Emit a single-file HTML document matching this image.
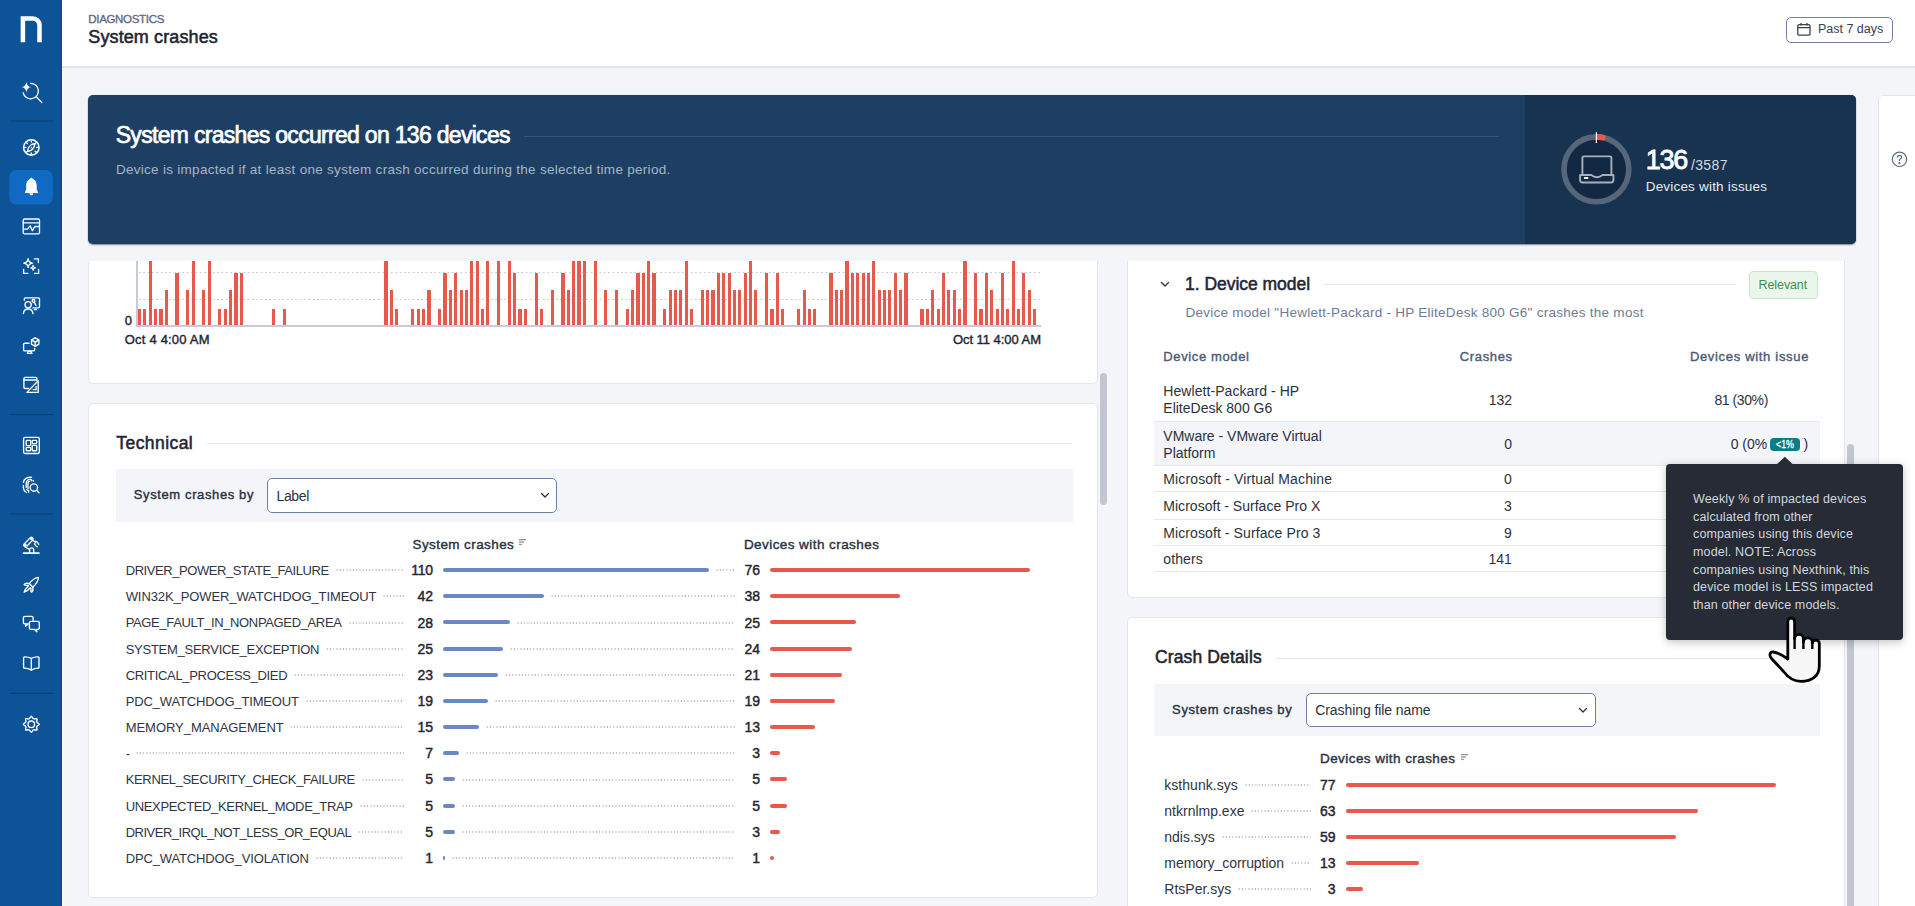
<!DOCTYPE html>
<html><head><meta charset="utf-8">
<style>
* { box-sizing:border-box; margin:0; padding:0; }
html,body { width:1915px; height:906px; overflow:hidden; background:#f4f5f9; font-family:"Liberation Sans", sans-serif; color:#1f2532; }
.abs { position:absolute; }
.t { position:absolute; white-space:nowrap; line-height:normal; }
.cb { position:absolute; width:3.2px; background:#e8584c; }
.bar { position:absolute; height:4px; border-radius:2px; }
.blue { background:#6a89c4; }
.red { background:#e8584c; }
.dots { position:absolute; height:2px; background-image:radial-gradient(circle at 1px 1px, #a9afbc 0.5px, transparent 0.85px); background-size:3.25px 2px; background-repeat:repeat-x; }
.panel { position:absolute; background:#fff; border:1px solid #e3e5f0; border-radius:5px; }
.hline { position:absolute; height:1px; background:#e3e6ee; }
.fbar { position:absolute; background:#f4f5f9; }
.sel { position:absolute; background:#fff; border:1.5px solid #6f80a0; border-radius:5px; }
.rb { position:absolute; left:1154px; width:666px; height:1px; background:#e6e8ef; }
</style></head><body>
<!-- sidebar -->
<div class="abs" style="left:0;top:0;width:62px;height:906px;background:#0c5397"></div>
<div class="abs" style="left:60px;top:0;width:1.5px;height:906px;background:#0a4b8e"></div>
<svg style="position:absolute;left:0;top:0" width="62" height="906" viewBox="0 0 62 906"><path d="M22.9 42.3 V18.4 H32.8 A6.7 6.7 0 0 1 39.5 25.1 V42.3" stroke="#fff" stroke-width="4.5" fill="none" stroke-linejoin="miter"/><g transform="translate(14,74)"><g stroke="#fff" fill="none" stroke-width="1.35" stroke-linecap="round" stroke-linejoin="round"><path d="M16.5 9.4 A7.7 7.7 0 1 1 9.2 18.8"/><path d="M22.9 23.6 L27.8 28.5"/></g><path d="M12.4 7.9 Q13 12.5 17.3 13.1 Q13 13.7 12.4 18.4 Q11.8 13.7 7.5 13.1 Q11.8 12.5 12.4 7.9Z" fill="#fff"/></g><g transform="translate(14,130)"><g stroke="#fff" fill="none" stroke-width="1.35" stroke-linecap="round" stroke-linejoin="round"><circle cx="17.3" cy="17.4" r="7.7" stroke-width="1.6"/><path d="M17.30 10.80 L17.30 12.00"/><path d="M21.97 12.73 L21.12 13.58"/><path d="M23.90 17.40 L22.70 17.40"/><path d="M21.97 22.07 L21.12 21.22"/><path d="M17.30 24.00 L17.30 22.80"/><path d="M12.63 22.07 L13.48 21.22"/><path d="M10.70 17.40 L11.90 17.40"/><path d="M12.63 12.73 L13.48 13.58"/><path d="M21 13.8 Q20 18.5 17.3 20.1 Q14.6 21.5 13.6 21.2 Q14.3 16.4 17.3 14.7 Q19.6 13.5 21 13.8Z" stroke-width="1.3"/><circle cx="17.3" cy="17.4" r="0.6" fill="#fff" stroke="none"/></g></g><rect x="9.3" y="169.9" width="43.6" height="34.7" rx="7.5" fill="#1069c3"/><path d="M31.4 178.6 C27.6 179.2 26.2 182.5 26.2 186 V189.3 L24.7 192.9 H38.2 L36.7 189.3 V186 C36.7 182.5 35.3 179.2 31.4 178.6Z" fill="#fff"/><circle cx="31.4" cy="178.8" r="1.1" fill="#fff"/><path d="M29.6 193.2 H33.2 V194 Q33.2 195.3 31.4 195.3 Q29.6 195.3 29.6 194Z" fill="#fff"/><g transform="translate(14,210)"><g stroke="#fff" fill="none" stroke-width="1.35" stroke-linecap="round" stroke-linejoin="round"><rect x="9.2" y="9" width="16.3" height="14.8" rx="1.4"/><path d="M9.2 12.8 H25.5"/><path d="M10.1 19.1 H13.5 L16.1 15.8 L18.4 20.6 L20.6 16.8 Q21.3 16.5 22 16.5 H25.3"/></g></g><g transform="translate(14,249)"><g stroke="#fff" fill="none" stroke-width="1.35" stroke-linecap="round" stroke-linejoin="round" stroke-width="1.5"><path d="M20.3 9.8 H24.4 V13.5"/><path d="M9.6 20.3 V24.4 H13.9"/><path d="M24.6 20.5 V24.4 H20.5"/><path d="M14.1 9.8 Q14.6 13.5 18.4 14.1 Q14.6 14.7 14.1 18.4 Q13.6 14.7 9.8 14.1 Q13.6 13.5 14.1 9.8Z" stroke-width="1.4"/><path d="M19.1 16.5 Q19.3 18.5 21.4 18.8 Q19.3 19.1 19.1 21.1 Q18.9 19.1 16.8 18.8 Q18.9 18.5 19.1 16.5Z" stroke-width="1.3"/></g></g><g transform="translate(14,288)"><g stroke="#fff" fill="none" stroke-width="1.35" stroke-linecap="round" stroke-linejoin="round"><path d="M10.3 12.2 V10.9 Q10.3 9.8 11.4 9.8 H24.4 Q25.5 9.8 25.5 10.9 V18.8 Q25.5 19.9 24.4 19.9 H19"/><path d="M20.3 21.5 H22.5"/><circle cx="14.1" cy="16.7" r="3.1"/><path d="M9.4 25.6 Q9.8 21 14.1 21 Q18.4 21 19 25.6"/><circle cx="19.5" cy="12.9" r="1.4"/><path d="M20.3 14.1 L21.9 17.4"/></g></g><g transform="translate(14,328)"><g stroke="#fff" fill="none" stroke-width="1.35" stroke-linecap="round" stroke-linejoin="round"><path d="M15 15.2 H10.8 Q9.6 15.2 9.6 16.4 V21.7 Q9.6 22.9 10.8 22.9 H19.4 Q20.6 22.9 20.6 21.7 V20.3"/><path d="M13.3 25.4 H17.9 L16.8 23.2 H14.4Z"/><path d="M21.2 9.8 L24.9 11.9 V16.2 L21.2 18.4 L17.5 16.2 V11.9Z"/><path d="M17.8 12.1 L21.2 14.1 L24.6 12.1 M21.2 14.1 V18.2"/></g></g><g transform="translate(14,368)"><g stroke="#fff" fill="none" stroke-width="1.35" stroke-linecap="round" stroke-linejoin="round"><path d="M14.6 20.5 H11.2 Q9.9 20.5 9.9 19.2 V10.7 Q9.9 9.4 11.2 9.4 H21.6 Q22.9 9.4 22.9 10.7 V11.2"/><path d="M9.9 12 H22.9"/><path d="M12.9 24.4 L24.2 12.8 V24.4Z"/><path d="M22.1 18.6 V21.6 H19.1"/></g></g><rect x="9.3" y="120.5" width="43.7" height="1" fill="#0a3e77"/><rect x="9.3" y="414" width="43.7" height="1" fill="#0a3e77"/><rect x="9.3" y="513.5" width="43.7" height="1" fill="#0a3e77"/><rect x="9.3" y="692.8" width="43.7" height="1" fill="#0a3e77"/><g transform="translate(14,428)"><g stroke="#fff" fill="none" stroke-width="1.35" stroke-linecap="round" stroke-linejoin="round"><rect x="9.6" y="9.4" width="15.7" height="16.1" rx="1.4"/><rect x="12.2" y="12.4" width="4.5" height="5.2" rx="0.8"/><rect x="18.2" y="12.4" width="4.5" height="3.2" rx="0.8"/><rect x="12.2" y="19.3" width="4.5" height="3.4" rx="0.8"/><rect x="18.2" y="17.4" width="4.5" height="5.3" rx="0.8"/></g></g><g transform="translate(14,468)"><g stroke="#fff" fill="none" stroke-width="1.35" stroke-linecap="round" stroke-linejoin="round"><circle cx="19.9" cy="19.5" r="3.7"/><path d="M22.6 22.3 L25 24.8"/><path d="M9.4 14.3 Q10.5 9 17.6 9.3"/><path d="M9.4 17.4 V20 Q9.6 22.8 12.3 24.5"/><path d="M12.2 19.5 V15.5 Q12.6 11.3 16.3 11.3 Q17.5 11.4 17.8 12.8"/><path d="M14 20.5 V15.3 Q14.4 13.4 15.5 13.5"/><path d="M14.6 23.6 L14.9 24.2"/><path d="M19.3 12.5 V13"/><path d="M12.8 21.5 Q13.3 22.5 14.5 22.5"/></g></g><g transform="translate(14,528)"><g stroke="#fff" fill="none" stroke-width="1.35" stroke-linecap="round" stroke-linejoin="round"><path d="M9.4 25.1 H25"  stroke-width="1.6"/><path d="M15.6 25 V21.8 Q15.6 19.9 17.6 19.9 Q19.7 19.9 19.7 21.8 V25"/><path d="M14.9 21.2 L10.4 18.4 Q9 17.4 10.2 16 L16.2 9.8 Q17.3 8.8 18.5 9.8 Q19.6 10.9 18.8 12 L13 18"/><circle cx="17.4" cy="10.9" r="0.6" fill="#fff"/><circle cx="11.3" cy="17.1" r="0.6" fill="#fff"/><path d="M19.5 12.8 L21.8 14.8"/><path d="M21.5 13.2 Q23.7 13.6 24.8 16.4"/><path d="M20.5 15.8 Q21.5 18.2 23.2 18.9"/></g></g><g transform="translate(14,568)"><g stroke="#fff" fill="none" stroke-width="1.35" stroke-linecap="round" stroke-linejoin="round"><path d="M24.4 9.3 Q19.5 9.8 15.2 15.6 L18.7 19.1 Q24 15 24.4 9.3Z"/><path d="M15.2 15.6 Q11.5 14.6 10.1 16.6 Q10.5 17.8 14.5 17.4"/><path d="M18.7 19.1 Q19.7 22.8 17.6 24.1 Q16.5 23.6 16.9 19.8"/><path d="M14.3 18.2 Q11.2 20.5 10.1 24.2 Q13.8 23 16 20"/></g></g><g transform="translate(14,607)"><g stroke="#fff" fill="none" stroke-width="1.35" stroke-linecap="round" stroke-linejoin="round"><path d="M14.4 16.9 H10.8 Q9.4 16.9 9.4 15.5 V10.8 Q9.4 9.4 10.8 9.4 H17.7 Q19.1 9.4 19.1 10.8 V13.3"/><path d="M11.6 16.9 V19.3 L13.4 17.8"/><path d="M16.8 14.4 H23.9 Q25.3 14.4 25.3 15.8 V20.9 Q25.3 22.3 23.9 22.3 V22.3 H22.5 L22.8 24.9 L20.3 22.3 H16.8 Q15.4 22.3 15.4 20.9 V15.8 Q15.4 14.4 16.8 14.4Z"/></g></g><g transform="translate(14,646)"><g stroke="#fff" fill="none" stroke-width="1.35" stroke-linecap="round" stroke-linejoin="round"><path d="M17.3 12.3 Q14.2 10.7 10.5 10.9 Q9.6 11 9.6 11.9 V21.5 Q9.6 22.2 10.5 22.2 Q14.5 22.3 17.3 24.3 Q20.1 22.3 24.1 22.2 Q25 22.2 25 21.5 V11.9 Q25 11 24.1 10.9 Q20.4 10.7 17.3 12.3Z"/><path d="M17.3 12.3 V24"/></g></g><g transform="translate(14,707)"><g stroke="#fff" fill="none" stroke-width="1.35" stroke-linecap="round" stroke-linejoin="round"><path d="M17.30 9.30 L18.24 10.16 L18.88 11.41 L19.63 11.66 L20.35 12.02 L21.68 11.59 L22.96 11.64 L23.01 12.92 L22.58 14.25 L22.94 14.97 L23.19 15.72 L24.44 16.36 L25.30 17.30 L24.44 18.24 L23.19 18.88 L22.94 19.63 L22.58 20.35 L23.01 21.68 L22.96 22.96 L21.68 23.01 L20.35 22.58 L19.63 22.94 L18.88 23.19 L18.24 24.44 L17.30 25.30 L16.36 24.44 L15.72 23.19 L14.97 22.94 L14.25 22.58 L12.92 23.01 L11.64 22.96 L11.59 21.68 L12.02 20.35 L11.66 19.63 L11.41 18.88 L10.16 18.24 L9.30 17.30 L10.16 16.36 L11.41 15.72 L11.66 14.97 L12.02 14.25 L11.59 12.92 L11.64 11.64 L12.92 11.59 L14.25 12.02 L14.97 11.66 L15.72 11.41 L16.36 10.16Z"/><circle cx="17.3" cy="17.3" r="3.3"/></g></g></svg>

<!-- header -->
<div class="abs" style="left:62px;top:0;width:1853px;height:66px;background:#fff"></div>
<div class="abs" style="left:62px;top:66px;width:1853px;height:2px;background:#e2e5ec"></div>
<div class="t" style="left:88.30px;top:12.80px;font-size:11.5px;color:#5e6a84;-webkit-text-stroke:0.34px #5e6a84;letter-spacing:-0.323px;">DIAGNOSTICS</div>
<div class="t" style="left:88.30px;top:27.20px;font-size:18px;color:#1f2532;-webkit-text-stroke:0.54px #1f2532;letter-spacing:0.112px;">System crashes</div>
<div class="abs" style="left:1786px;top:17px;width:107px;height:26px;border:1.5px solid #7184a3;border-radius:5px;background:#fff"></div>
<svg class="abs" style="left:1796px;top:21px" width="17" height="17" viewBox="0 0 17 17" fill="none" stroke="#3a4150" stroke-width="1.3" stroke-linejoin="round"><rect x="1.8" y="3.6" width="12.2" height="10.6" rx="1.2"/><path d="M1.8 6.6 H14 M5 2 V4.6 M11 2 V4.6"/></svg>
<div class="t" style="left:1817.90px;top:22.27px;font-size:12.5px;color:#3a4150;">Past 7 days</div>

<!-- banner -->
<div class="abs" style="left:88px;top:95.2px;width:1768px;height:148.4px;background:#1d3f63;border-radius:5px;overflow:hidden;box-shadow:0 1px 1.5px rgba(0,0,0,0.45)">
  <div class="abs" style="left:1437px;top:0;width:331px;height:149px;background:#17334f"></div>
</div>
<div class="t" style="left:115.70px;top:122.29px;font-size:23px;color:#ffffff;-webkit-text-stroke:0.69px #ffffff;letter-spacing:-0.697px;">System crashes occurred on 136 devices</div>
<div class="abs" style="left:524px;top:135.5px;width:975px;height:1px;background:#34557d"></div>
<div class="t" style="left:115.90px;top:162.25px;font-size:13.5px;color:#a8b4c6;letter-spacing:0.288px;">Device is impacted if at least one system crash occurred during the selected time period.</div>
<svg class="abs" style="left:1556px;top:129px" width="81" height="81" viewBox="0 0 81 81">
  <circle cx="40.4" cy="40.3" r="32.4" fill="#132843" stroke="#56677c" stroke-width="5.6"/>
  <path d="M44.2 8.1 A32.4 32.4 0 0 1 46.86 8.55" stroke="#e8584c" stroke-width="5.6" fill="none" stroke-linecap="round"/><path d="M40.4 7.9 A32.4 32.4 0 0 1 44.35 8.14" stroke="#e8584c" stroke-width="5.6" fill="none"/>
  <path d="M40.4 3.3 V14" stroke="#fff" stroke-width="1.2"/>
  <g fill="none" stroke="#a9b0bb" stroke-width="1.9" stroke-linejoin="round">
    <path d="M26.4 46 V29 Q26.4 27.4 28 27.4 H53.8 Q55.4 27.4 55.4 29 V46"/>
    <path d="M24.1 46 H35.2 Q40.8 50.5 46.6 46 H57.4 V51 Q57.4 53.5 54.9 53.5 H26.6 Q24.1 53.5 24.1 51Z"/>
  </g>
  <rect x="27.8" y="48" width="4.7" height="1.9" rx="0.9" fill="#fff"/>
</svg>
<div class="t" style="left:1645.70px;top:145.21px;font-size:27px;color:#ffffff;-webkit-text-stroke:0.81px #ffffff;letter-spacing:-1.225px;">136</div>
<div class="t" style="left:1690.90px;top:157.19px;font-size:14px;color:#d3d9e2;letter-spacing:0.392px;">/3587</div>
<div class="t" style="left:1645.70px;top:179.35px;font-size:13.5px;color:#e8ebf0;letter-spacing:0.195px;">Devices with issues</div>

<!-- right narrow panel -->
<div class="panel" style="left:1878px;top:95px;width:60px;height:830px"></div>
<svg class="abs" style="left:1891px;top:151px" width="17" height="17" viewBox="0 0 17 17" fill="none" stroke="#5d6a85" stroke-width="1.2"><circle cx="8.5" cy="8.3" r="7.2"/><path d="M6.4 6.4 Q6.4 4.3 8.5 4.3 Q10.6 4.3 10.6 6.3 Q10.6 7.6 8.5 8.5 V10"/><circle cx="8.5" cy="12.2" r="0.5" fill="#5d6a85"/></svg>

<!-- left scroll area -->
<div class="abs" style="left:62px;top:261.4px;width:1036px;height:645px;overflow:hidden">
 <div class="abs" style="left:-62px;top:-261.4px;width:1915px;height:906px">
  <div class="panel" style="left:88px;top:150px;width:1010px;height:234px"></div>
  <div class="abs" style="left:139px;top:271.6px;width:902px;height:1px;background-image:linear-gradient(to right,#c3c9d6 50%,transparent 50%);background-size:4.35px 1px"></div>
  <div class="abs" style="left:139px;top:299px;width:902px;height:1px;background-image:linear-gradient(to right,#c3c9d6 50%,transparent 50%);background-size:4.35px 1px"></div>
  <div class="cb" style="left:137.90px;top:309.0px;height:16.2px"></div>
<div class="cb" style="left:143.26px;top:309.0px;height:16.2px"></div>
<div class="cb" style="left:148.62px;top:250.0px;height:75.2px"></div>
<div class="cb" style="left:153.98px;top:309.0px;height:16.2px"></div>
<div class="cb" style="left:159.34px;top:309.0px;height:16.2px"></div>
<div class="cb" style="left:164.70px;top:290.2px;height:35.0px"></div>
<div class="cb" style="left:175.42px;top:272.6px;height:52.6px"></div>
<div class="cb" style="left:186.14px;top:290.2px;height:35.0px"></div>
<div class="cb" style="left:191.50px;top:250.0px;height:75.2px"></div>
<div class="cb" style="left:202.22px;top:290.2px;height:35.0px"></div>
<div class="cb" style="left:207.58px;top:250.0px;height:75.2px"></div>
<div class="cb" style="left:218.30px;top:309.0px;height:16.2px"></div>
<div class="cb" style="left:223.66px;top:309.0px;height:16.2px"></div>
<div class="cb" style="left:229.02px;top:290.2px;height:35.0px"></div>
<div class="cb" style="left:234.38px;top:272.6px;height:52.6px"></div>
<div class="cb" style="left:239.74px;top:272.6px;height:52.6px"></div>
<div class="cb" style="left:271.90px;top:309.0px;height:16.2px"></div>
<div class="cb" style="left:282.62px;top:309.0px;height:16.2px"></div>
<div class="cb" style="left:384.46px;top:250.0px;height:75.2px"></div>
<div class="cb" style="left:389.82px;top:290.2px;height:35.0px"></div>
<div class="cb" style="left:395.18px;top:309.0px;height:16.2px"></div>
<div class="cb" style="left:411.26px;top:309.0px;height:16.2px"></div>
<div class="cb" style="left:416.62px;top:309.0px;height:16.2px"></div>
<div class="cb" style="left:421.98px;top:309.0px;height:16.2px"></div>
<div class="cb" style="left:427.34px;top:290.2px;height:35.0px"></div>
<div class="cb" style="left:438.06px;top:309.0px;height:16.2px"></div>
<div class="cb" style="left:443.42px;top:272.6px;height:52.6px"></div>
<div class="cb" style="left:448.78px;top:290.2px;height:35.0px"></div>
<div class="cb" style="left:454.14px;top:272.6px;height:52.6px"></div>
<div class="cb" style="left:459.50px;top:290.2px;height:35.0px"></div>
<div class="cb" style="left:464.86px;top:290.2px;height:35.0px"></div>
<div class="cb" style="left:470.22px;top:250.0px;height:75.2px"></div>
<div class="cb" style="left:475.58px;top:250.0px;height:75.2px"></div>
<div class="cb" style="left:480.94px;top:309.0px;height:16.2px"></div>
<div class="cb" style="left:486.30px;top:250.0px;height:75.2px"></div>
<div class="cb" style="left:497.02px;top:250.0px;height:75.2px"></div>
<div class="cb" style="left:507.74px;top:250.0px;height:75.2px"></div>
<div class="cb" style="left:513.10px;top:272.6px;height:52.6px"></div>
<div class="cb" style="left:518.46px;top:309.0px;height:16.2px"></div>
<div class="cb" style="left:523.82px;top:309.0px;height:16.2px"></div>
<div class="cb" style="left:534.54px;top:272.6px;height:52.6px"></div>
<div class="cb" style="left:539.90px;top:309.0px;height:16.2px"></div>
<div class="cb" style="left:550.62px;top:290.2px;height:35.0px"></div>
<div class="cb" style="left:561.34px;top:272.6px;height:52.6px"></div>
<div class="cb" style="left:566.70px;top:290.2px;height:35.0px"></div>
<div class="cb" style="left:572.06px;top:250.0px;height:75.2px"></div>
<div class="cb" style="left:577.42px;top:250.0px;height:75.2px"></div>
<div class="cb" style="left:582.78px;top:250.0px;height:75.2px"></div>
<div class="cb" style="left:593.50px;top:250.0px;height:75.2px"></div>
<div class="cb" style="left:604.22px;top:290.2px;height:35.0px"></div>
<div class="cb" style="left:614.94px;top:290.2px;height:35.0px"></div>
<div class="cb" style="left:625.66px;top:309.0px;height:16.2px"></div>
<div class="cb" style="left:631.02px;top:290.2px;height:35.0px"></div>
<div class="cb" style="left:636.38px;top:272.6px;height:52.6px"></div>
<div class="cb" style="left:641.74px;top:272.6px;height:52.6px"></div>
<div class="cb" style="left:647.10px;top:250.0px;height:75.2px"></div>
<div class="cb" style="left:652.46px;top:272.6px;height:52.6px"></div>
<div class="cb" style="left:663.18px;top:309.0px;height:16.2px"></div>
<div class="cb" style="left:668.54px;top:290.2px;height:35.0px"></div>
<div class="cb" style="left:673.90px;top:290.2px;height:35.0px"></div>
<div class="cb" style="left:679.26px;top:290.2px;height:35.0px"></div>
<div class="cb" style="left:684.62px;top:250.0px;height:75.2px"></div>
<div class="cb" style="left:689.98px;top:309.0px;height:16.2px"></div>
<div class="cb" style="left:700.70px;top:290.2px;height:35.0px"></div>
<div class="cb" style="left:706.06px;top:290.2px;height:35.0px"></div>
<div class="cb" style="left:711.42px;top:290.2px;height:35.0px"></div>
<div class="cb" style="left:716.78px;top:272.6px;height:52.6px"></div>
<div class="cb" style="left:722.14px;top:272.6px;height:52.6px"></div>
<div class="cb" style="left:727.50px;top:272.6px;height:52.6px"></div>
<div class="cb" style="left:732.86px;top:290.2px;height:35.0px"></div>
<div class="cb" style="left:738.22px;top:290.2px;height:35.0px"></div>
<div class="cb" style="left:743.58px;top:272.6px;height:52.6px"></div>
<div class="cb" style="left:748.94px;top:250.0px;height:75.2px"></div>
<div class="cb" style="left:754.30px;top:290.2px;height:35.0px"></div>
<div class="cb" style="left:765.02px;top:272.6px;height:52.6px"></div>
<div class="cb" style="left:770.38px;top:309.0px;height:16.2px"></div>
<div class="cb" style="left:775.74px;top:272.6px;height:52.6px"></div>
<div class="cb" style="left:781.10px;top:309.0px;height:16.2px"></div>
<div class="cb" style="left:797.18px;top:309.0px;height:16.2px"></div>
<div class="cb" style="left:802.54px;top:290.2px;height:35.0px"></div>
<div class="cb" style="left:807.90px;top:309.0px;height:16.2px"></div>
<div class="cb" style="left:813.26px;top:309.0px;height:16.2px"></div>
<div class="cb" style="left:829.34px;top:272.6px;height:52.6px"></div>
<div class="cb" style="left:834.70px;top:290.2px;height:35.0px"></div>
<div class="cb" style="left:840.06px;top:290.2px;height:35.0px"></div>
<div class="cb" style="left:845.42px;top:250.0px;height:75.2px"></div>
<div class="cb" style="left:850.78px;top:272.6px;height:52.6px"></div>
<div class="cb" style="left:856.14px;top:272.6px;height:52.6px"></div>
<div class="cb" style="left:861.50px;top:272.6px;height:52.6px"></div>
<div class="cb" style="left:866.86px;top:272.6px;height:52.6px"></div>
<div class="cb" style="left:872.22px;top:250.0px;height:75.2px"></div>
<div class="cb" style="left:877.58px;top:290.2px;height:35.0px"></div>
<div class="cb" style="left:882.94px;top:290.2px;height:35.0px"></div>
<div class="cb" style="left:888.30px;top:290.2px;height:35.0px"></div>
<div class="cb" style="left:893.66px;top:272.6px;height:52.6px"></div>
<div class="cb" style="left:899.02px;top:290.2px;height:35.0px"></div>
<div class="cb" style="left:904.38px;top:272.6px;height:52.6px"></div>
<div class="cb" style="left:920.46px;top:309.0px;height:16.2px"></div>
<div class="cb" style="left:925.82px;top:309.0px;height:16.2px"></div>
<div class="cb" style="left:931.18px;top:290.2px;height:35.0px"></div>
<div class="cb" style="left:936.54px;top:309.0px;height:16.2px"></div>
<div class="cb" style="left:941.90px;top:272.6px;height:52.6px"></div>
<div class="cb" style="left:947.26px;top:290.2px;height:35.0px"></div>
<div class="cb" style="left:952.62px;top:290.2px;height:35.0px"></div>
<div class="cb" style="left:957.98px;top:309.0px;height:16.2px"></div>
<div class="cb" style="left:963.34px;top:250.0px;height:75.2px"></div>
<div class="cb" style="left:974.06px;top:272.6px;height:52.6px"></div>
<div class="cb" style="left:979.42px;top:309.0px;height:16.2px"></div>
<div class="cb" style="left:984.78px;top:272.6px;height:52.6px"></div>
<div class="cb" style="left:990.14px;top:290.2px;height:35.0px"></div>
<div class="cb" style="left:995.50px;top:309.0px;height:16.2px"></div>
<div class="cb" style="left:1000.86px;top:272.6px;height:52.6px"></div>
<div class="cb" style="left:1006.22px;top:309.0px;height:16.2px"></div>
<div class="cb" style="left:1011.58px;top:250.0px;height:75.2px"></div>
<div class="cb" style="left:1016.94px;top:309.0px;height:16.2px"></div>
<div class="cb" style="left:1022.30px;top:272.6px;height:52.6px"></div>
<div class="cb" style="left:1027.66px;top:290.2px;height:35.0px"></div>
<div class="cb" style="left:1033.02px;top:309.0px;height:16.2px"></div>
  <div class="abs" style="left:135.7px;top:150px;width:2px;height:177.3px;background:#c6cbd7"></div>
  <div class="abs" style="left:135.7px;top:325.2px;width:905.6px;height:2px;background:#c6cbd7"></div>
  <div class="t" style="left:124.80px;top:312.71px;font-size:13px;color:#1f2532;-webkit-text-stroke:0.39px #1f2532;">0</div>
  <div class="t" style="left:124.80px;top:332.21px;font-size:13px;color:#1f2532;-webkit-text-stroke:0.39px #1f2532;letter-spacing:0.194px;">Oct 4 4:00 AM</div>
  <div class="t" style="left:952.90px;top:332.01px;font-size:13px;color:#1f2532;-webkit-text-stroke:0.39px #1f2532;letter-spacing:-0.041px;">Oct 11 4:00 AM</div>

  <div class="panel" style="left:88px;top:402.8px;width:1010px;height:495.6px"></div>
  <div class="t" style="left:116.30px;top:432.67px;font-size:17.5px;color:#1f2532;-webkit-text-stroke:0.53px #1f2532;letter-spacing:0.430px;">Technical</div>
  <div class="hline" style="left:206.9px;top:443px;width:864px"></div>
  <div class="fbar" style="left:115.7px;top:469.3px;width:957.3px;height:52.3px"></div>
  <div class="t" style="left:133.80px;top:487.11px;font-size:13px;color:#2b3140;-webkit-text-stroke:0.39px #2b3140;letter-spacing:0.612px;">System crashes by</div>
  <div class="sel" style="left:267.2px;top:478.2px;width:290.2px;height:34.8px"></div>
  <div class="t" style="left:276.50px;top:487.69px;font-size:14px;color:#2b3140;letter-spacing:-0.363px;">Label</div>
  <svg class="abs" style="left:539.5px;top:492px" width="10" height="7" viewBox="0 0 10 7" fill="none" stroke="#2b3140" stroke-width="1.3" stroke-linecap="round" stroke-linejoin="round"><path d="M1.5 1.5 L5 5 L8.5 1.5"/></svg>
  <div class="t" style="left:412.50px;top:536.55px;font-size:13.5px;color:#2b3140;-webkit-text-stroke:0.40px #2b3140;letter-spacing:0.406px;">System crashes</div>
  <svg class="abs" style="left:518.7px;top:539.2px" width="8" height="7" viewBox="0 0 8 7" fill="#8b93a3"><rect x="0" y="0" width="7" height="1.3"/><rect x="0" y="2.4" width="5" height="1.3"/><rect x="0" y="4.8" width="2.8" height="1.3"/></svg>
  <div class="t" style="left:743.90px;top:536.55px;font-size:13.5px;color:#2b3140;-webkit-text-stroke:0.40px #2b3140;letter-spacing:0.432px;">Devices with crashes</div>
  <div class="t" style="left:125.70px;top:563.11px;font-size:13px;color:#2f3542;letter-spacing:-0.427px;">DRIVER_POWER_STATE_FAILURE</div>
<div class="dots" style="left:335.8px;top:569.2px;width:68.0px"></div>
<div class="t" style="left:411.20px;top:562.19px;font-size:14px;color:#1f2532;-webkit-text-stroke:0.42px #1f2532;letter-spacing:-0.259px;">110</div>
<div class="bar blue" style="left:442.5px;top:568px;width:266.0px"></div>
<div class="dots" style="left:715.5px;top:569.2px;width:19.9px"></div>
<div class="t" style="left:744.53px;top:562.19px;font-size:14px;color:#1f2532;-webkit-text-stroke:0.42px #1f2532;">76</div>
<div class="bar red" style="left:770.2px;top:568px;width:260.0px"></div>
<div class="t" style="left:125.70px;top:589.27px;font-size:13px;color:#2f3542;letter-spacing:-0.097px;">WIN32K_POWER_WATCHDOG_TIMEOUT</div>
<div class="dots" style="left:383.2px;top:595.4px;width:20.6px"></div>
<div class="t" style="left:417.43px;top:588.35px;font-size:14px;color:#1f2532;-webkit-text-stroke:0.42px #1f2532;">42</div>
<div class="bar blue" style="left:442.5px;top:594px;width:101.6px"></div>
<div class="dots" style="left:551.1px;top:595.4px;width:184.3px"></div>
<div class="t" style="left:744.53px;top:588.35px;font-size:14px;color:#1f2532;-webkit-text-stroke:0.42px #1f2532;">38</div>
<div class="bar red" style="left:770.2px;top:594px;width:130.0px"></div>
<div class="t" style="left:125.70px;top:615.43px;font-size:13px;color:#2f3542;letter-spacing:-0.354px;">PAGE_FAULT_IN_NONPAGED_AREA</div>
<div class="dots" style="left:348.6px;top:621.5px;width:55.2px"></div>
<div class="t" style="left:417.43px;top:614.51px;font-size:14px;color:#1f2532;-webkit-text-stroke:0.42px #1f2532;">28</div>
<div class="bar blue" style="left:442.5px;top:620px;width:67.7px"></div>
<div class="dots" style="left:517.2px;top:621.5px;width:218.2px"></div>
<div class="t" style="left:744.53px;top:614.51px;font-size:14px;color:#1f2532;-webkit-text-stroke:0.42px #1f2532;">25</div>
<div class="bar red" style="left:770.2px;top:620px;width:85.5px"></div>
<div class="t" style="left:125.70px;top:641.59px;font-size:13px;color:#2f3542;letter-spacing:-0.264px;">SYSTEM_SERVICE_EXCEPTION</div>
<div class="dots" style="left:326.2px;top:647.7px;width:77.6px"></div>
<div class="t" style="left:417.43px;top:640.67px;font-size:14px;color:#1f2532;-webkit-text-stroke:0.42px #1f2532;">25</div>
<div class="bar blue" style="left:442.5px;top:647px;width:60.5px"></div>
<div class="dots" style="left:510.0px;top:647.7px;width:225.4px"></div>
<div class="t" style="left:744.53px;top:640.67px;font-size:14px;color:#1f2532;-webkit-text-stroke:0.42px #1f2532;">24</div>
<div class="bar red" style="left:770.2px;top:647px;width:82.1px"></div>
<div class="t" style="left:125.70px;top:667.75px;font-size:13px;color:#2f3542;letter-spacing:-0.321px;">CRITICAL_PROCESS_DIED</div>
<div class="dots" style="left:294.3px;top:673.8px;width:109.5px"></div>
<div class="t" style="left:417.43px;top:666.83px;font-size:14px;color:#1f2532;-webkit-text-stroke:0.42px #1f2532;">23</div>
<div class="bar blue" style="left:442.5px;top:673px;width:55.6px"></div>
<div class="dots" style="left:505.1px;top:673.8px;width:230.3px"></div>
<div class="t" style="left:744.53px;top:666.83px;font-size:14px;color:#1f2532;-webkit-text-stroke:0.42px #1f2532;">21</div>
<div class="bar red" style="left:770.2px;top:673px;width:71.8px"></div>
<div class="t" style="left:125.70px;top:693.91px;font-size:13px;color:#2f3542;letter-spacing:-0.154px;">PDC_WATCHDOG_TIMEOUT</div>
<div class="dots" style="left:305.7px;top:700.0px;width:98.1px"></div>
<div class="t" style="left:417.43px;top:692.99px;font-size:14px;color:#1f2532;-webkit-text-stroke:0.42px #1f2532;">19</div>
<div class="bar blue" style="left:442.5px;top:699px;width:45.9px"></div>
<div class="dots" style="left:495.4px;top:700.0px;width:240.0px"></div>
<div class="t" style="left:744.53px;top:692.99px;font-size:14px;color:#1f2532;-webkit-text-stroke:0.42px #1f2532;">19</div>
<div class="bar red" style="left:770.2px;top:699px;width:65.0px"></div>
<div class="t" style="left:125.70px;top:720.07px;font-size:13px;color:#2f3542;letter-spacing:-0.042px;">MEMORY_MANAGEMENT</div>
<div class="dots" style="left:290.4px;top:726.2px;width:113.4px"></div>
<div class="t" style="left:417.43px;top:719.15px;font-size:14px;color:#1f2532;-webkit-text-stroke:0.42px #1f2532;">15</div>
<div class="bar blue" style="left:442.5px;top:725px;width:36.3px"></div>
<div class="dots" style="left:485.8px;top:726.2px;width:249.6px"></div>
<div class="t" style="left:744.53px;top:719.15px;font-size:14px;color:#1f2532;-webkit-text-stroke:0.42px #1f2532;">13</div>
<div class="bar red" style="left:770.2px;top:725px;width:44.5px"></div>
<div class="t" style="left:125.70px;top:746.23px;font-size:13px;color:#2f3542;">-</div>
<div class="dots" style="left:136.4px;top:752.3px;width:267.4px"></div>
<div class="t" style="left:425.21px;top:745.31px;font-size:14px;color:#1f2532;-webkit-text-stroke:0.42px #1f2532;">7</div>
<div class="bar blue" style="left:442.5px;top:751px;width:16.9px"></div>
<div class="dots" style="left:466.4px;top:752.3px;width:269.0px"></div>
<div class="t" style="left:752.31px;top:745.31px;font-size:14px;color:#1f2532;-webkit-text-stroke:0.42px #1f2532;">3</div>
<div class="bar red" style="left:770.2px;top:751px;width:10.3px"></div>
<div class="t" style="left:125.70px;top:772.39px;font-size:13px;color:#2f3542;letter-spacing:-0.344px;">KERNEL_SECURITY_CHECK_FAILURE</div>
<div class="dots" style="left:361.9px;top:778.5px;width:41.9px"></div>
<div class="t" style="left:425.21px;top:771.47px;font-size:14px;color:#1f2532;-webkit-text-stroke:0.42px #1f2532;">5</div>
<div class="bar blue" style="left:442.5px;top:777px;width:12.1px"></div>
<div class="dots" style="left:461.6px;top:778.5px;width:273.8px"></div>
<div class="t" style="left:752.31px;top:771.47px;font-size:14px;color:#1f2532;-webkit-text-stroke:0.42px #1f2532;">5</div>
<div class="bar red" style="left:770.2px;top:777px;width:17.1px"></div>
<div class="t" style="left:125.70px;top:798.55px;font-size:13px;color:#2f3542;letter-spacing:-0.343px;">UNEXPECTED_KERNEL_MODE_TRAP</div>
<div class="dots" style="left:359.7px;top:804.6px;width:44.1px"></div>
<div class="t" style="left:425.21px;top:797.63px;font-size:14px;color:#1f2532;-webkit-text-stroke:0.42px #1f2532;">5</div>
<div class="bar blue" style="left:442.5px;top:804px;width:12.1px"></div>
<div class="dots" style="left:461.6px;top:804.6px;width:273.8px"></div>
<div class="t" style="left:752.31px;top:797.63px;font-size:14px;color:#1f2532;-webkit-text-stroke:0.42px #1f2532;">5</div>
<div class="bar red" style="left:770.2px;top:804px;width:17.1px"></div>
<div class="t" style="left:125.70px;top:824.71px;font-size:13px;color:#2f3542;letter-spacing:-0.495px;">DRIVER_IRQL_NOT_LESS_OR_EQUAL</div>
<div class="dots" style="left:358.4px;top:830.8px;width:45.4px"></div>
<div class="t" style="left:425.21px;top:823.79px;font-size:14px;color:#1f2532;-webkit-text-stroke:0.42px #1f2532;">5</div>
<div class="bar blue" style="left:442.5px;top:830px;width:12.1px"></div>
<div class="dots" style="left:461.6px;top:830.8px;width:273.8px"></div>
<div class="t" style="left:752.31px;top:823.79px;font-size:14px;color:#1f2532;-webkit-text-stroke:0.42px #1f2532;">3</div>
<div class="bar red" style="left:770.2px;top:830px;width:10.3px"></div>
<div class="t" style="left:125.70px;top:850.87px;font-size:13px;color:#2f3542;letter-spacing:-0.134px;">DPC_WATCHDOG_VIOLATION</div>
<div class="dots" style="left:315.7px;top:857.0px;width:88.1px"></div>
<div class="t" style="left:425.21px;top:849.95px;font-size:14px;color:#1f2532;-webkit-text-stroke:0.42px #1f2532;">1</div>
<div class="bar blue" style="left:442.5px;top:856px;width:2.4px"></div>
<div class="dots" style="left:451.9px;top:857.0px;width:283.5px"></div>
<div class="t" style="left:752.31px;top:849.95px;font-size:14px;color:#1f2532;-webkit-text-stroke:0.42px #1f2532;">1</div>
<div class="bar red" style="left:770.2px;top:856px;width:3.4px"></div>
 </div>
</div>
<div class="abs" style="left:1100.3px;top:373px;width:6.7px;height:132px;border-radius:4px;background:#c3c6d2"></div>

<!-- right scroll area -->
<div class="abs" style="left:1110px;top:261.4px;width:746px;height:645px;overflow:hidden">
 <div class="abs" style="left:-1110px;top:-261.4px;width:1915px;height:906px">
  <div class="panel" style="left:1127.3px;top:150px;width:718px;height:448.3px"></div>
  <svg class="abs" style="left:1160.2px;top:280.6px" width="10" height="7" viewBox="0 0 10 7" fill="none" stroke="#2b3140" stroke-width="1.3" stroke-linecap="round" stroke-linejoin="round"><path d="M1.5 1.5 L5 5 L8.5 1.5"/></svg>
  <div class="t" style="left:1185.10px;top:274.17px;font-size:17.5px;color:#1f2532;-webkit-text-stroke:0.53px #1f2532;letter-spacing:-0.034px;">1. Device model</div>
  <div class="hline" style="left:1323.7px;top:284px;width:412px"></div>
  <div class="abs" style="left:1749px;top:271px;width:68.6px;height:27.5px;border:1px solid #c8e6cb;background:#eaf6eb;border-radius:4px"></div>
  <div class="t" style="left:1758.60px;top:277.78px;font-size:12.5px;color:#3e8e4e;letter-spacing:-0.105px;">Relevant</div>
  <div class="t" style="left:1185.40px;top:305.35px;font-size:13.5px;color:#6d7b97;letter-spacing:0.265px;">Device model "Hewlett-Packard - HP EliteDesk 800 G6" crashes the most</div>
  <div class="t" style="left:1163.30px;top:348.81px;font-size:13px;color:#4e5b78;-webkit-text-stroke:0.39px #4e5b78;letter-spacing:0.622px;">Device model</div>
  <div class="t" style="left:1459.80px;top:348.81px;font-size:13px;color:#4e5b78;-webkit-text-stroke:0.39px #4e5b78;letter-spacing:0.632px;">Crashes</div>
  <div class="t" style="left:1689.90px;top:348.81px;font-size:13px;color:#4e5b78;-webkit-text-stroke:0.39px #4e5b78;letter-spacing:0.681px;">Devices with issue</div>
  <div class="t" style="left:1163.30px;top:382.99px;font-size:14px;color:#2b3140;letter-spacing:0.069px;">Hewlett-Packard - HP</div>
  <div class="t" style="left:1163.30px;top:400.09px;font-size:14px;color:#2b3140;">EliteDesk 800 G6</div>
  <div class="t" style="left:1488.64px;top:391.79px;font-size:14px;color:#2b3140;">132</div>
  <div class="t" style="left:1714.40px;top:391.79px;font-size:14px;color:#2b3140;letter-spacing:-0.415px;">81 (30%)</div>
  <div class="rb" style="top:421px"></div>
  <div class="abs" style="left:1154px;top:422px;width:666px;height:43.3px;background:#f4f5f9"></div>
  <div class="t" style="left:1163.30px;top:427.79px;font-size:14px;color:#2b3140;">VMware - VMware Virtual</div>
  <div class="t" style="left:1163.30px;top:444.79px;font-size:14px;color:#2b3140;">Platform</div>
  <div class="t" style="left:1504.21px;top:436.29px;font-size:14px;color:#2b3140;">0</div>
  <div class="t" style="left:1730.70px;top:436.29px;font-size:14px;color:#2b3140;">0 (0%</div>
  <div class="abs" style="left:1769.5px;top:437.5px;width:30.6px;height:13.5px;background:#0e7b85;border-radius:4px"></div>
  <div class="t" style="left:1775.9px;top:437.52px;font-size:10.5px;color:#fff;-webkit-text-stroke:0.3px #fff;transform:scaleX(0.845);transform-origin:0 0">&lt;1%</div>
  <div class="t" style="left:1803.50px;top:436.29px;font-size:14px;color:#2b3140;">)</div>
  <div class="rb" style="top:465.3px"></div>
  <div class="t" style="left:1163.30px;top:471.39px;font-size:14px;color:#2b3140;letter-spacing:0.124px;">Microsoft - Virtual Machine</div>
  <div class="t" style="left:1504.01px;top:471.39px;font-size:14px;color:#2b3140;">0</div>
  <div class="rb" style="top:491.3px"></div>
  <div class="t" style="left:1163.30px;top:498.29px;font-size:14px;color:#2b3140;letter-spacing:0.026px;">Microsoft - Surface Pro X</div>
  <div class="t" style="left:1504.01px;top:498.29px;font-size:14px;color:#2b3140;">3</div>
  <div class="rb" style="top:518.5px"></div>
  <div class="t" style="left:1163.30px;top:524.59px;font-size:14px;color:#2b3140;letter-spacing:0.090px;">Microsoft - Surface Pro 3</div>
  <div class="t" style="left:1504.01px;top:524.59px;font-size:14px;color:#2b3140;">9</div>
  <div class="rb" style="top:544.8px"></div>
  <div class="t" style="left:1163.30px;top:550.89px;font-size:14px;color:#2b3140;letter-spacing:0.098px;">others</div>
  <div class="t" style="left:1488.44px;top:550.89px;font-size:14px;color:#2b3140;">141</div>
  <div class="rb" style="top:571.1px"></div>

  <div class="panel" style="left:1127.3px;top:617.3px;width:718px;height:400px"></div>
  <div class="t" style="left:1154.90px;top:646.87px;font-size:17.5px;color:#1f2532;-webkit-text-stroke:0.53px #1f2532;letter-spacing:0.147px;">Crash Details</div>
  <div class="hline" style="left:1275.8px;top:657.5px;width:544px"></div>
  <div class="fbar" style="left:1153.9px;top:684px;width:665.9px;height:52px"></div>
  <div class="t" style="left:1172.10px;top:701.91px;font-size:13px;color:#2b3140;-webkit-text-stroke:0.39px #2b3140;letter-spacing:0.612px;">System crashes by</div>
  <div class="sel" style="left:1306.3px;top:692.6px;width:289.7px;height:34.9px"></div>
  <div class="t" style="left:1315.20px;top:702.19px;font-size:14px;color:#2b3140;letter-spacing:-0.078px;">Crashing file name</div>
  <svg class="abs" style="left:1578px;top:706.5px" width="10" height="7" viewBox="0 0 10 7" fill="none" stroke="#2b3140" stroke-width="1.3" stroke-linecap="round" stroke-linejoin="round"><path d="M1.5 1.5 L5 5 L8.5 1.5"/></svg>
  <div class="t" style="left:1320.00px;top:750.85px;font-size:13.5px;color:#2b3140;-webkit-text-stroke:0.40px #2b3140;letter-spacing:0.432px;">Devices with crashes</div>
  <svg class="abs" style="left:1460.5px;top:753.5px" width="8" height="7" viewBox="0 0 8 7" fill="#8b93a3"><rect x="0" y="0" width="7" height="1.3"/><rect x="0" y="2.4" width="5" height="1.3"/><rect x="0" y="4.8" width="2.8" height="1.3"/></svg>
  <div class="t" style="left:1164.30px;top:776.59px;font-size:14px;color:#2f3542;letter-spacing:0.026px;">ksthunk.sys</div>
<div class="dots" style="left:1244.7px;top:783.9px;width:66.1px"></div>
<div class="t" style="left:1320.03px;top:776.59px;font-size:14px;color:#1f2532;-webkit-text-stroke:0.42px #1f2532;">77</div>
<div class="bar red" style="left:1346px;top:783px;width:430.0px"></div>
<div class="t" style="left:1164.30px;top:802.69px;font-size:14px;color:#2f3542;">ntkrnlmp.exe</div>
<div class="dots" style="left:1251.4px;top:810.0px;width:59.4px"></div>
<div class="t" style="left:1320.03px;top:802.69px;font-size:14px;color:#1f2532;-webkit-text-stroke:0.42px #1f2532;">63</div>
<div class="bar red" style="left:1346px;top:809px;width:351.8px"></div>
<div class="t" style="left:1164.30px;top:828.79px;font-size:14px;color:#2f3542;">ndis.sys</div>
<div class="dots" style="left:1221.9px;top:836.1px;width:88.9px"></div>
<div class="t" style="left:1320.03px;top:828.79px;font-size:14px;color:#1f2532;-webkit-text-stroke:0.42px #1f2532;">59</div>
<div class="bar red" style="left:1346px;top:835px;width:329.5px"></div>
<div class="t" style="left:1164.30px;top:854.89px;font-size:14px;color:#2f3542;letter-spacing:-0.056px;">memory_corruption</div>
<div class="dots" style="left:1291.0px;top:862.2px;width:19.8px"></div>
<div class="t" style="left:1320.03px;top:854.89px;font-size:14px;color:#1f2532;-webkit-text-stroke:0.42px #1f2532;">13</div>
<div class="bar red" style="left:1346px;top:861px;width:72.6px"></div>
<div class="t" style="left:1164.30px;top:880.99px;font-size:14px;color:#2f3542;">RtsPer.sys</div>
<div class="dots" style="left:1238.2px;top:888.3px;width:72.6px"></div>
<div class="t" style="left:1327.81px;top:880.99px;font-size:14px;color:#1f2532;-webkit-text-stroke:0.42px #1f2532;">3</div>
<div class="bar red" style="left:1346px;top:887px;width:16.8px"></div>
 </div>
</div>
<div class="abs" style="left:1847px;top:443.5px;width:6.5px;height:470px;border-radius:4px;background:#c3c6d2"></div>

<!-- tooltip -->
<div class="abs" style="left:1666.2px;top:464.3px;width:237.2px;height:175.5px;background:#262b35;border-radius:4px;box-shadow:0 2px 8px rgba(0,0,0,0.25)"></div>
<svg class="abs" style="left:1776px;top:456px" width="18" height="9" viewBox="0 0 18 9"><path d="M0 9 L8.8 0.8 L17.6 9Z" fill="#262b35"/></svg>
<div class="t" style="left:1693.00px;top:492.28px;font-size:12.5px;color:#d3d7de;letter-spacing:0.145px;">Weekly % of impacted devices</div>
<div class="t" style="left:1693.00px;top:509.88px;font-size:12.5px;color:#d3d7de;letter-spacing:0.135px;">calculated from other</div>
<div class="t" style="left:1693.00px;top:527.48px;font-size:12.5px;color:#d3d7de;letter-spacing:0.139px;">companies using this device</div>
<div class="t" style="left:1693.00px;top:545.08px;font-size:12.5px;color:#d3d7de;letter-spacing:0.154px;">model. NOTE: Across</div>
<div class="t" style="left:1693.00px;top:562.68px;font-size:12.5px;color:#d3d7de;letter-spacing:0.137px;">companies using Nexthink, this</div>
<div class="t" style="left:1693.00px;top:580.27px;font-size:12.5px;color:#d3d7de;letter-spacing:0.145px;">device model is LESS impacted</div>
<div class="t" style="left:1693.00px;top:597.88px;font-size:12.5px;color:#d3d7de;letter-spacing:0.138px;">than other device models.</div>

<!-- cursor -->
<svg class="abs" style="left:1760px;top:610px" width="70" height="80" viewBox="1760 610 70 80">
 <path d="M1787.8 657.5 V621.4 A3.4 3.4 0 0 1 1794.6 621.4 V638.8 A4.4 4.4 0 0 1 1803.4 638.8 V642.25 A4.45 4.45 0 0 1 1812.3 642.25 V643.5 A3.5 3.5 0 0 1 1819.3 643.5 V666 C1819.3 676 1812 681.4 1801 681.4 C1793 681.4 1788.5 678 1784 672 L1771.5 658.5 C1768.8 655.5 1769.8 651.6 1773.5 652 C1776.5 652.4 1782 655 1787.8 659Z" fill="#f7f7f7" stroke="#000" stroke-width="2.8" stroke-linejoin="round"/>
 <path d="M1794.6 637 V649 M1803.4 640.5 V649 M1812.3 642.5 V649" stroke="#000" stroke-width="2.4"/>
</svg>
</body></html>
